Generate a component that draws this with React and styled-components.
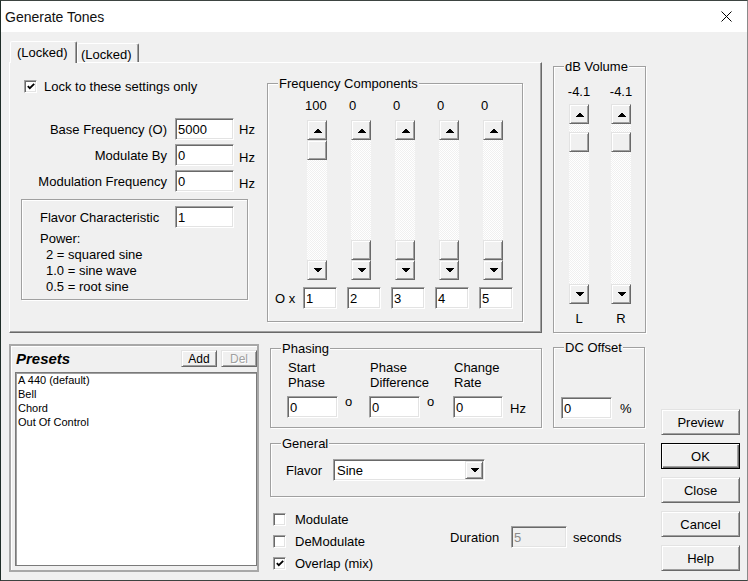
import React from "react";
import styled, { createGlobalStyle, css } from "styled-components";

const GlobalStyle = createGlobalStyle`
  html, body { margin: 0; padding: 0; background: #f0f0f0; }
  body {
    font-family: "Liberation Sans", Arial, sans-serif;
    font-size: 13px;
    color: #000;
  }
  *, *::before, *::after { box-sizing: border-box; }
`;

const raised = css`
  background: #f0f0f0;
  border: 1px solid;
  border-color: #e3e3e3 #696969 #696969 #e3e3e3;
  box-shadow: inset 1px 1px #fff, inset -1px -1px #a0a0a0;
`;

const sunken = css`
  border: 1px solid;
  border-color: #a0a0a0 #fff #fff #a0a0a0;
  box-shadow: inset 1px 1px #696969, inset -1px -1px #e3e3e3;
`;

const etched = css`
  border: 1px solid #a0a0a0;
  box-shadow: inset 1px 1px #fff, 1px 1px #fff;
`;

const Window = styled.div`
  width: 748px;
  height: 581px;
  border-style: solid;
  border-width: 1px;
  border-color: #3d4441 #8a8a8a #3d4441 #1f2d28;
  background: #f0f0f0;
  display: flex;
  flex-direction: column;
  overflow: hidden;
`;

const TitleBar = styled.div`
  height: 31px;
  flex: none;
  background: #fff;
  display: flex;
  align-items: center;
  justify-content: space-between;
  padding: 0 15px 0 4px;
  font-size: 14px;
  color: #111;
`;

const Body = styled.div`
  flex: 1;
  padding-left: 8px;
  display: flex;
  flex-direction: column;
`;

const TopRow = styled.div`
  margin-top: 9px;
  display: flex;
  align-items: flex-start;
`;

const TabArea = styled.div`
  width: 533px;
  display: flex;
  flex-direction: column;
`;

const TabStrip = styled.div`
  height: 21px;
  padding-left: 1px;
  display: flex;
  align-items: flex-end;
`;

const Tab = styled.div`
  position: relative;
  background: #f0f0f0;
  border-style: solid;
  border-width: 1px 1px 0 1px;
  border-color: #fff #696969 transparent #fff;
  box-shadow: inset -1px 0 #a0a0a0;
  border-radius: 2px 2px 0 0;
  white-space: nowrap;
  ${(p) =>
    p.$active
      ? css`
          width: 67px;
          height: 22px;
          margin-bottom: -1px;
          z-index: 1;
          padding: 3px 0 0 6px;
        `
      : css`
          width: 62px;
          height: 19px;
          padding: 3px 0 0 3px;
        `}
`;

const TabPanel = styled.div`
  width: 533px;
  height: 271px;
  border-style: solid;
  border-width: 1px;
  border-color: #fff #696969 #696969 #fff;
  box-shadow: inset -1px -1px #a0a0a0;
  padding: 16px 0 0 11px;
  display: flex;
  align-items: flex-start;
`;

const LeftCol = styled.div`
  width: 227px;
  display: flex;
  flex-direction: column;
`;

const CheckRow = styled.label`
  height: ${(p) => p.$h || 14}px;
  display: flex;
  align-items: center;
  gap: ${(p) => p.$gap || 7}px;
  padding-left: 3px;
  white-space: nowrap;
`;

const CheckBoxBox = styled.span`
  ${sunken};
  background: #fff;
  width: 13px;
  height: 13px;
  flex: none;
  display: inline-flex;
  align-items: center;
  justify-content: center;
`;

const CheckBox = ({ checked }) => (
  <CheckBoxBox>
    {checked && (
      <svg width="8" height="7" viewBox="0 0 8 7">
        <polyline points="0.8,3.2 2.8,5.2 7.2,0.8" fill="none" stroke="#000" strokeWidth="1.8" />
      </svg>
    )}
  </CheckBoxBox>
);

const FieldGrid = styled.div`
  margin-top: 25px;
  display: grid;
  grid-template-columns: 154px 59px auto;
  grid-auto-rows: 22px;
  row-gap: 4px;
  align-items: center;
`;

const FieldLabel = styled.span`
  text-align: right;
  padding-right: 8px;
  white-space: nowrap;
`;

const Unit = styled.span`
  margin-left: ${(p) => p.$ml ?? 5}px;
  white-space: nowrap;
  ${(p) => p.$raise && css`align-self: flex-start; margin-top: -2px;`}
  ${(p) => p.$drop && css`margin-top: ${p.$drop}px;`}
`;

const TextBox = styled.div`
  ${sunken};
  background: ${(p) => (p.$disabled ? "#f0f0f0" : "#fff")};
  color: ${(p) => (p.$disabled ? "#8a8a8a" : "#000")};
  width: ${(p) => p.$w}px;
  height: 22px;
  flex: none;
  padding: 0 2px;
  display: flex;
  align-items: center;
  white-space: nowrap;
  overflow: hidden;
`;

const FlavorBox = styled.div`
  ${etched};
  margin-top: 7px;
  width: 227px;
  height: 101px;
  padding: 6px 0 0 18px;
`;

const FlavorRow = styled.div`
  display: grid;
  grid-template-columns: 135px 59px;
  height: 22px;
  align-items: center;
`;

const PowerText = styled.div`
  margin-top: 3px;
  line-height: 16px;
`;

const PowerLine = styled.div`
  padding-left: ${(p) => (p.$indent ? 6 : 0)}px;
  white-space: nowrap;
`;

const Group = styled.div`
  ${etched};
  position: relative;
  flex: none;
  width: ${(p) => p.$w}px;
  height: ${(p) => p.$h}px;
  margin-left: ${(p) => p.$ml || 0}px;
  margin-top: ${(p) => p.$mt || 0}px;
  padding: ${(p) => p.$pad || "0"};
`;

const Legend = styled.span`
  position: absolute;
  top: -8px;
  left: 10px;
  padding: 0 1px;
  background: #f0f0f0;
  line-height: 15px;
  white-space: nowrap;
`;

const FreqGrid = styled.div`
  display: grid;
  grid-template-columns: 18px repeat(5, 34px);
  grid-template-rows: 15px 160px 22px;
  column-gap: 10px;
  row-gap: 7px;
`;

const ValueLabel = styled.span`
  line-height: 15px;
  padding-left: 2px;
  white-space: nowrap;
`;

const GridLabel = styled.span`
  align-self: center;
  white-space: nowrap;
  grid-column: 1;
`;

const ScrollBar = styled.div`
  width: 20px;
  height: ${(p) => p.$h}px;
  margin-left: ${(p) => p.$ml || 0}px;
  display: flex;
  flex-direction: column;
`;

const ScrollBtn = styled.div`
  ${raised};
  width: 20px;
  height: 20px;
  flex: none;
  display: flex;
  align-items: center;
  justify-content: center;
`;

const Track = styled.div`
  flex: 1;
  background: repeating-conic-gradient(#f0f0f0 0 25%, #fff 0 50%) 0 0 / 2px 2px;
  display: flex;
  flex-direction: column;
`;

const Thumb = styled.div`
  ${raised};
  width: 20px;
  height: 20px;
  flex: none;
`;

const Arrow = ({ dir }) => (
  <svg width="9" height="5" viewBox="0 0 9 5" shapeRendering="crispEdges">
    <polygon points={dir === "up" ? "0,5 9,5 4.5,0.5" : "0,0 9,0 4.5,4.5"} fill="#000" />
  </svg>
);

const VScroll = ({ height, offset, ml }) => (
  <ScrollBar $h={height} $ml={ml}>
    <ScrollBtn>
      <Arrow dir="up" />
    </ScrollBtn>
    <Track>
      <Thumb style={{ marginTop: offset }} />
    </Track>
    <ScrollBtn>
      <Arrow dir="down" />
    </ScrollBtn>
  </ScrollBar>
);

const VolRow = styled.div`
  display: flex;
  gap: 22px;
`;

const VolCol = styled.div`
  width: 20px;
  display: flex;
  flex-direction: column;
  align-items: center;
`;

const VolLabel = styled.span`
  line-height: 15px;
  white-space: nowrap;
  margin-top: ${(p) => p.$mt || 0}px;
  margin-bottom: ${(p) => p.$mb || 0}px;
`;

const BottomRow = styled.div`
  margin-top: 11px;
  display: flex;
  align-items: flex-start;
`;

const PresetsBox = styled.div`
  width: 250px;
  height: 228px;
  flex: none;
  border: 2px solid #a8a8a8;
  box-shadow: inset 1px 1px #fff;
  padding: 4px 0 0 4px;
  display: flex;
  flex-direction: column;
`;

const PresetsHeader = styled.div`
  height: 17px;
  display: flex;
  align-items: center;
`;

const PresetsTitle = styled.span`
  margin-left: 1px;
  font-size: 15px;
  font-weight: bold;
  font-style: italic;
`;

const SmallButton = styled.div`
  ${raised};
  width: 36px;
  height: 17px;
  margin-left: ${(p) => p.$ml || 0}px;
  display: flex;
  align-items: center;
  justify-content: center;
  font-size: 12px;
  color: ${(p) => (p.$disabled ? "#a0a0a0" : "#000")};
  text-shadow: ${(p) => (p.$disabled ? "1px 1px #fff" : "none")};
`;

const ListBox = styled.div`
  margin-top: 5px;
  width: 242px;
  height: 194px;
  background: #fff;
  border: 1px solid #7a7a7a;
  box-shadow: inset 1px 1px #a0a0a0;
  padding: 0 0 0 2px;
  font-size: 11px;
  line-height: 14px;
`;

const ListItem = styled.div`
  white-space: nowrap;
`;

const MiddleCol = styled.div`
  margin-left: 11px;
  width: 375px;
  flex: none;
  display: flex;
  flex-direction: column;
`;

const PhaseRow = styled.div`
  margin-top: 3px;
  display: flex;
  align-items: flex-start;
`;

const PhaseGrid = styled.div`
  display: grid;
  grid-template-columns: 82px 84px auto;
`;

const PhaseCell = styled.div`
  display: flex;
  flex-direction: column;
`;

const PhaseLabel = styled.div`
  padding-left: 1px;
  line-height: 15px;
  white-space: nowrap;
`;

const InputRow = styled.div`
  margin-top: ${(p) => p.$mt || 0}px;
  display: flex;
  align-items: center;
  height: 22px;
`;

const FlavorLabel = styled.span`
  width: 47px;
  flex: none;
`;

const Select = styled.div`
  ${sunken};
  background: #fff;
  width: 152px;
  height: 22px;
  padding: 1px;
  display: flex;
  align-items: stretch;
`;

const SelectText = styled.span`
  flex: 1;
  padding-left: 2px;
  display: flex;
  align-items: center;
`;

const DropBtn = styled.div`
  ${raised};
  width: 18px;
  display: flex;
  align-items: center;
  justify-content: center;
`;

const OptionsRow = styled.div`
  margin-top: 11px;
  display: flex;
  align-items: flex-start;
`;

const CheckCol = styled.div`
  width: 180px;
  flex: none;
  display: flex;
  flex-direction: column;
`;

const DurationRow = styled.div`
  margin-top: 18px;
  display: flex;
  align-items: center;
`;

const DurationLabel = styled.span`
  width: 61px;
  flex: none;
`;

const ButtonsCol = styled.div`
  margin-left: 16px;
  margin-top: 65px;
  display: flex;
  flex-direction: column;
  gap: 8px;
`;

const Button = styled.div`
  ${raised};
  width: 79px;
  height: 26px;
  display: flex;
  align-items: center;
  justify-content: center;
  ${(p) =>
    p.$default &&
    css`
      border-color: #000;
      box-shadow: inset 1px 1px #fff, inset -1px -1px #696969, inset -2px -2px #a0a0a0;
    `}
`;

const CloseIcon = () => (
  <svg width="11" height="11" viewBox="0 0 11 11">
    <path d="M0.5 0.5 L10.5 10.5 M10.5 0.5 L0.5 10.5" stroke="#000" strokeWidth="1" fill="none" />
  </svg>
);

const freqValues = ["100", "0", "0", "0", "0"];

export default function App() {
  return (
    <>
      <GlobalStyle />
      <Window>
        <TitleBar>
          <span>Generate Tones</span>
          <CloseIcon />
        </TitleBar>
        <Body>
          <TopRow>
            <TabArea>
              <TabStrip>
                <Tab $active>(Locked)</Tab>
                <Tab>(Locked)</Tab>
              </TabStrip>
              <TabPanel>
                <LeftCol>
                  <CheckRow>
                    <CheckBox checked />
                    <span>Lock to these settings only</span>
                  </CheckRow>
                  <FieldGrid>
                    <FieldLabel>Base Frequency (O)</FieldLabel>
                    <TextBox $w={59}>5000</TextBox>
                    <Unit>Hz</Unit>
                    <FieldLabel>Modulate By</FieldLabel>
                    <TextBox $w={59}>0</TextBox>
                    <Unit $drop={4}>Hz</Unit>
                    <FieldLabel>Modulation Frequency</FieldLabel>
                    <TextBox $w={59}>0</TextBox>
                    <Unit $drop={4}>Hz</Unit>
                  </FieldGrid>
                  <FlavorBox>
                    <FlavorRow>
                      <span>Flavor Characteristic</span>
                      <TextBox $w={59}>1</TextBox>
                    </FlavorRow>
                    <PowerText>
                      <PowerLine>Power:</PowerLine>
                      <PowerLine $indent>2 = squared sine</PowerLine>
                      <PowerLine $indent>1.0 = sine wave</PowerLine>
                      <PowerLine $indent>0.5 = root sine</PowerLine>
                    </PowerText>
                  </FlavorBox>
                </LeftCol>
                <Group $w={256} $h={239} $ml={19} $mt={4} $pad="14px 0 0 7px">
                  <Legend>Frequency Components</Legend>
                  <FreqGrid>
                    <span />
                    {freqValues.map((v, i) => (
                      <ValueLabel key={"v" + i}>{v}</ValueLabel>
                    ))}
                    <span />
                    {freqValues.map((v, i) => (
                      <VScroll key={"s" + i} height={160} ml={4} offset={i === 0 ? 0 : 100} />
                    ))}
                    <GridLabel>O x</GridLabel>
                    {[1, 2, 3, 4, 5].map((n) => (
                      <TextBox key={"t" + n} $w={34}>
                        {n}
                      </TextBox>
                    ))}
                  </FreqGrid>
                </Group>
              </TabPanel>
            </TabArea>
            <Group $w={93} $h={267} $ml={11} $mt={25} $pad="17px 0 0 15px">
              <Legend>dB Volume</Legend>
              <VolRow>
                {["L", "R"].map((ch) => (
                  <VolCol key={ch}>
                    <VolLabel $mb={5}>-4.1</VolLabel>
                    <VScroll height={200} offset={8} />
                    <VolLabel $mt={7}>{ch}</VolLabel>
                  </VolCol>
                ))}
              </VolRow>
            </Group>
          </TopRow>

          <BottomRow>
            <PresetsBox>
              <PresetsHeader>
                <PresetsTitle>Presets</PresetsTitle>
                <SmallButton style={{ marginLeft: "auto" }}>Add</SmallButton>
                <SmallButton $ml={4} $disabled>
                  Del
                </SmallButton>
              </PresetsHeader>
              <ListBox>
                <ListItem>A 440 (default)</ListItem>
                <ListItem>Bell</ListItem>
                <ListItem>Chord</ListItem>
                <ListItem>Out Of Control</ListItem>
              </ListBox>
            </PresetsBox>

            <MiddleCol>
              <PhaseRow>
                <Group $w={272} $h={80} $mt={1} $pad="11px 0 0 16px">
                  <Legend>Phasing</Legend>
                  <PhaseGrid>
                    <PhaseCell>
                      <PhaseLabel>
                        Start
                        <br />
                        Phase
                      </PhaseLabel>
                      <InputRow $mt={6}>
                        <TextBox $w={51}>0</TextBox>
                        <Unit $ml={7} $raise>
                          o
                        </Unit>
                      </InputRow>
                    </PhaseCell>
                    <PhaseCell>
                      <PhaseLabel>
                        Phase
                        <br />
                        Difference
                      </PhaseLabel>
                      <InputRow $mt={6}>
                        <TextBox $w={51}>0</TextBox>
                        <Unit $ml={7} $raise>
                          o
                        </Unit>
                      </InputRow>
                    </PhaseCell>
                    <PhaseCell>
                      <PhaseLabel>
                        Change
                        <br />
                        Rate
                      </PhaseLabel>
                      <InputRow $mt={6}>
                        <TextBox $w={50}>0</TextBox>
                        <Unit $ml={7} $drop={3}>
                          Hz
                        </Unit>
                      </InputRow>
                    </PhaseCell>
                  </PhaseGrid>
                </Group>
                <Group $w={92} $h={81} $ml={11} $pad="49px 0 0 7px">
                  <Legend>DC Offset</Legend>
                  <InputRow>
                    <TextBox $w={51}>0</TextBox>
                    <Unit $ml={8}>%</Unit>
                  </InputRow>
                </Group>
              </PhaseRow>

              <Group $w={375} $h={54} $mt={15} $pad="15px 0 0 15px">
                <Legend>General</Legend>
                <InputRow>
                  <FlavorLabel>Flavor</FlavorLabel>
                  <Select>
                    <SelectText>Sine</SelectText>
                    <DropBtn>
                      <Arrow dir="down" />
                    </DropBtn>
                  </Select>
                </InputRow>
              </Group>

              <OptionsRow>
                <CheckCol>
                  <CheckRow $h={22} $gap={9}>
                    <CheckBox />
                    <span>Modulate</span>
                  </CheckRow>
                  <CheckRow $h={22} $gap={9}>
                    <CheckBox />
                    <span>DeModulate</span>
                  </CheckRow>
                  <CheckRow $h={22} $gap={9}>
                    <CheckBox checked />
                    <span>Overlap (mix)</span>
                  </CheckRow>
                </CheckCol>
                <DurationRow>
                  <DurationLabel>Duration</DurationLabel>
                  <TextBox $w={56} $disabled>
                    5
                  </TextBox>
                  <Unit $ml={6}>seconds</Unit>
                </DurationRow>
              </OptionsRow>
            </MiddleCol>

            <ButtonsCol>
              <Button>Preview</Button>
              <Button $default>OK</Button>
              <Button>Close</Button>
              <Button>Cancel</Button>
              <Button>Help</Button>
            </ButtonsCol>
          </BottomRow>
        </Body>
      </Window>
    </>
  );
}
